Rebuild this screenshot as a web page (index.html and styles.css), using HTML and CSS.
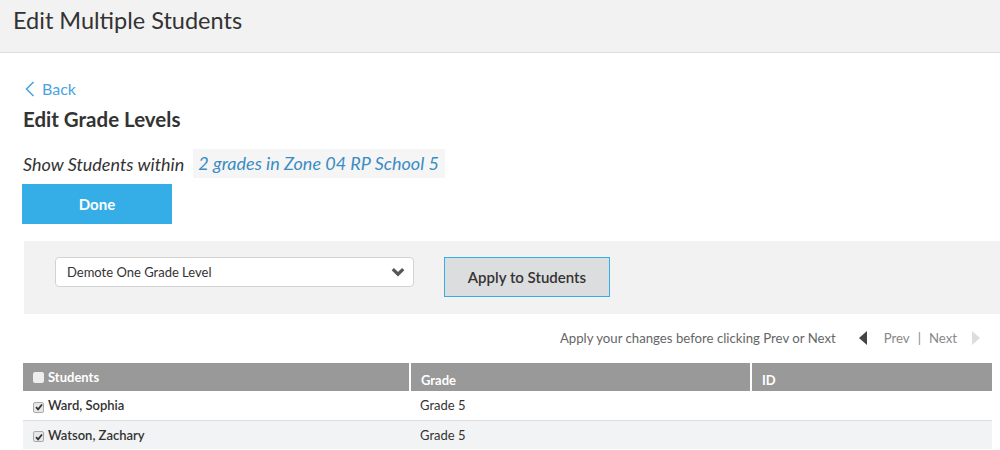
FILE: index.html
```html
<!DOCTYPE html>
<html lang="en">
<head>
<meta charset="utf-8">
<title>Edit Multiple Students</title>
<link rel="stylesheet" href="styles.css">
</head>
<body>
<header class="topbar">
  <h1 class="title">Edit Multiple Students</h1>
</header>
<main class="content">
  <a class="back" href="#">
    <svg class="back-icon" width="10" height="16" viewBox="0 0 10 16"><path d="M8.5 1 L1.5 8 L8.5 15" fill="none" stroke="#4aa3df" stroke-width="1.6"/></svg>
    <span>Back</span>
  </a>
  <h2 class="section-title">Edit Grade Levels</h2>
  <div class="scope">
    <span class="scope-label">Show Students within</span>
    <a class="scope-link" href="#">2 grades in Zone 04 RP School 5</a>
  </div>
  <button class="done-btn">Done</button>
  <div class="action-panel">
    <div class="select-box">
      <span class="select-text">Demote One Grade Level</span>
      <svg class="select-chevron" width="14" height="10" viewBox="0 0 14 10"><path d="M1.8 2.2 L7 7.2 L12.2 2.2" fill="none" stroke="#555" stroke-width="3.2"/></svg>
    </div>
    <button class="apply-btn">Apply to Students</button>
  </div>
  <div class="pager">
    <span class="pager-note">Apply your changes before clicking Prev or Next</span>
    <span class="tri tri-left"></span>
    <span class="pager-link">Prev</span>
    <span class="pager-sep">|</span>
    <span class="pager-link">Next</span>
    <span class="tri tri-right"></span>
  </div>
  <table class="students">
    <thead>
      <tr>
        <th class="col-name"><span class="cb cb-empty"></span>Students</th>
        <th class="col-grade">Grade</th>
        <th class="col-id">ID</th>
      </tr>
    </thead>
    <tbody>
      <tr>
        <td class="name"><span class="cb cb-checked"><svg width="8" height="8" viewBox="0 0 8 8"><path d="M1 4.2 L3.1 6.3 L7 1.5" fill="none" stroke="#333" stroke-width="1.8"/></svg></span>Ward, Sophia</td>
        <td>Grade 5</td>
        <td></td>
      </tr>
      <tr class="alt">
        <td class="name"><span class="cb cb-checked"><svg width="8" height="8" viewBox="0 0 8 8"><path d="M1 4.2 L3.1 6.3 L7 1.5" fill="none" stroke="#333" stroke-width="1.8"/></svg></span>Watson, Zachary</td>
        <td>Grade 5</td>
        <td></td>
      </tr>
    </tbody>
  </table>
</main>
</body>
</html>
```

FILE: styles.css
```css
* { box-sizing: border-box; }
body {
  margin: 0;
  font-family: "Lato", "Noto Sans", "Liberation Sans", sans-serif;
  color: #333;
  background: #fff;
}
.topbar {
  height: 53px;
  background: #f2f2f2;
  border-bottom: 1px solid #dcdcdc;
  padding: 7px 0 0 13px;
}
.title {
  margin: 0;
  font-size: 23.5px;
  font-weight: 400;
  line-height: 26px;
  color: #333;
}
.content {
  padding-left: 22px;
  display: flex;
  flex-direction: column;
  align-items: flex-start;
}
.back {
  margin-top: 26px;
  margin-left: 3px;
  display: flex;
  align-items: center;
  gap: 7px;
  color: #4aa3df;
  text-decoration: none;
  font-size: 16px;
  line-height: 20px;
}
.section-title {
  margin: 8px 0 0 1px;
  font-size: 20.5px;
  line-height: 24px;
  font-weight: 700;
  color: #333;
}
.scope {
  margin-top: 18px;
  display: flex;
  align-items: center;
  height: 29px;
  font-style: italic;
  font-size: 18px;
}
.scope-label { color: #333; padding-left: 1px; }
.scope-link {
  margin-left: 9px;
  background: #f5f5f5;
  color: #3a8cc4;
  text-decoration: none;
  height: 29px;
  line-height: 29px;
  padding: 0 6px 0 5px;
}
.done-btn {
  margin-top: 6px;
  width: 150px;
  height: 40px;
  border: none;
  background: #35ade6;
  color: #fff;
  font-family: inherit;
  font-weight: 700;
  font-size: 15px;
}
.action-panel {
  margin-top: 17px;
  margin-left: 2px;
  align-self: stretch;
  height: 73px;
  background: #f2f2f2;
  padding: 16px 0 0 31px;
  display: flex;
  align-items: flex-start;
  gap: 30px;
}
.select-box {
  width: 359px;
  height: 30px;
  background: #fff;
  border: 1px solid #d2d2d2;
  border-radius: 4px;
  display: flex;
  align-items: center;
  justify-content: space-between;
  padding: 0 8px 0 11px;
  font-size: 13px;
  color: #333;
}
.select-chevron { display: block; }
.apply-btn {
  width: 166px;
  height: 40px;
  background: #dcdddf;
  border: 1px solid #35ade6;
  color: #333;
  font-family: inherit;
  font-size: 15px;
  font-weight: 600;
}
.pager {
  margin-top: 14px;
  align-self: stretch;
  display: flex;
  justify-content: flex-end;
  align-items: center;
  height: 20px;
  padding-right: 20px;
  font-size: 13.2px;
  color: #666;
}
.pager-note { margin-right: 23px; }
.tri {
  width: 0;
  height: 0;
  border-top: 7px solid transparent;
  border-bottom: 7px solid transparent;
}
.tri-left { border-right: 8px solid #444; margin-right: 17px; }
.tri-right { border-left: 8px solid #ddd; margin-left: 15px; }
.pager-link { color: #888; }
.pager-sep { color: #888; margin: 0 8px; }
.students {
  margin-top: 15px;
  margin-left: 1px;
  width: 969px;
  border-collapse: collapse;
  font-size: 13px;
}
.students th {
  background: #999;
  color: #fff;
  font-weight: 700;
  text-align: left;
  height: 28px;
  padding: 0 10px;
  border-left: 2px solid #fff;
}
.students th:first-child { border-left: none; }
.students th.col-grade, .students th.col-id { padding-top: 5px; }
.col-name { width: 387px; }
.col-grade { width: 341px; }
.students td {
  height: 29px;
  padding: 0 10px;
  color: #333;
}
.students tbody tr:first-child td { border-bottom: 1px solid #ddd; }
.students tr.alt td { background: #f2f3f5; height: 29px; }
.students td.name { font-weight: 600; }
.cb {
  display: inline-flex;
  align-items: center;
  justify-content: center;
  width: 11px;
  height: 11px;
  margin-right: 4px;
  vertical-align: -1px;
  border-radius: 2px;
}
.cb-empty { background: #eee; }
.cb-checked { background: #e8e8e8; border: 1px solid #aaa; }
.cb svg { display: block; }
```
